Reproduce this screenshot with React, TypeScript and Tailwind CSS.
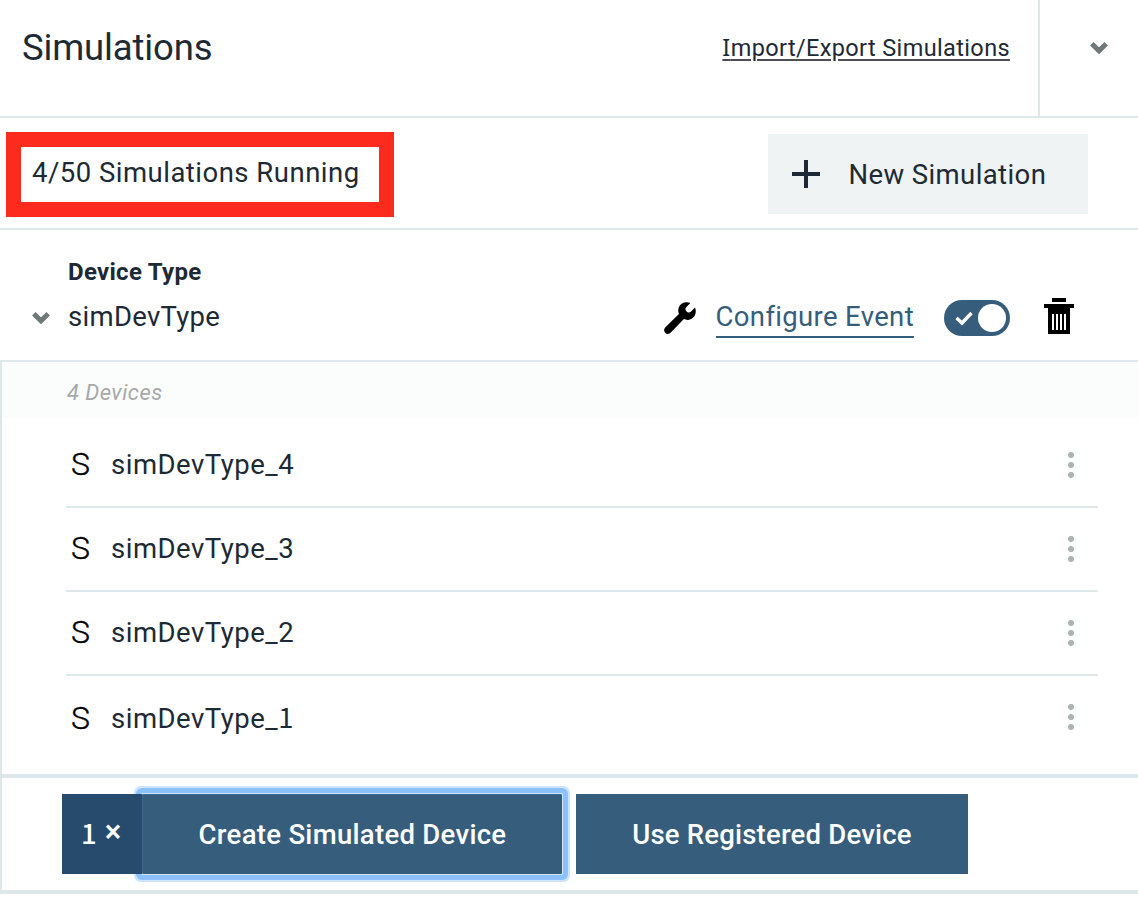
import React from "react";

type IconProps = { className?: string };

const Chevron = ({ className = "" }: IconProps) => (
  <svg className={`h-3 w-[18px] shrink-0 ${className}`} viewBox="0 0 18 12" fill="none">
    <path d="M1.8 1.8 L9 8.8 L16.2 1.8" stroke="#6f7878" strokeWidth="5" />
  </svg>
);

const Wrench = () => (
  <svg className="h-8 w-8 shrink-0" viewBox="0 0 32 32">
    <path
      d="M26.4 1 L22.2 5.2 C21.2 6.3 21.2 7.9 22.2 8.9 L23.2 9.9 C24.2 10.9 25.8 10.8 26.8 9.8 L31 5.5 C33.2 10.5 30.6 17.4 24.2 17.9 C22.6 18 21.2 17.7 19.9 17.1 L6.8 30.6 C5.2 32.3 2.9 32.4 1.4 30.9 C-0.4 29.2 -0.3 26.9 1.4 25.2 L14.9 12.1 C13.3 8 14.6 3.6 18 1.5 C20.5 0 23.7 -0.2 26.4 1 Z"
      fill="#000"
    />
  </svg>
);

const Trash = () => (
  <svg className="h-9 w-[30px] shrink-0" viewBox="0 0 30 36" shapeRendering="crispEdges">
    <path d="M8 0h14v4H8zM0 6h30v4H0zM4 10h22v26H4z" fill="#000" />
    <path d="M8 16h2v16H8zM12 16h2v16h-2zM16 16h2v16h-2zM20 16h2v16h-2z" fill="#fff" />
  </svg>
);

const Dots = () => (
  <svg className="h-[26px] w-1.5 shrink-0" viewBox="0 0 6 26" fill="#a9b5b4">
    <circle cx="3" cy="3" r="3" />
    <circle cx="3" cy="13" r="3" />
    <circle cx="3" cy="23" r="3" />
  </svg>
);

const One = () => <span className="font-['Noto_Sans_CJK_JP',sans-serif] leading-none">1</span>;

const devices = [4, 3, 2, 1];

export default function App() {
  return (
    <div className="h-[910px] w-full overflow-hidden bg-white font-['Roboto',sans-serif] text-[27.5px] text-[#1d2a35]">
      <header className="flex h-[118px] border-b-2 border-[#dfe8e8]">
        <h1 className="grow pl-[22px] text-[36.5px] leading-[95px] tracking-[-0.15px]">Simulations</h1>
        <a className="mr-[28px] text-[23.5px] leading-[95px] tracking-[0.37px] underline decoration-[#4d4f52] decoration-2 underline-offset-[3px]">
          <span className="font-['Noto_Sans',sans-serif]">I</span>mport/Export Simulations
        </a>
        <div className="w-[100px] border-l-2 border-[#dfe8e8] pl-[50px] pt-[42px]">
          <Chevron />
        </div>
      </header>

      <section className="flex h-[112px] items-start justify-between border-b-2 border-[#dfe8e8]">
        <div className="mt-3.5 ml-1.5 h-[85px] w-[388px] border-[15px] border-[#fc2b1e] pl-[11px] leading-[51px] tracking-[0.49px] whitespace-nowrap">
          4/50 Simulations Running
        </div>
        <button className="mt-4 mr-[50px] flex h-20 w-80 items-center bg-[#eff3f4] pl-6 tracking-[0.4px]">
          <svg className="mr-[28.5px] h-7 w-7" viewBox="0 0 28 28">
            <path d="M14 0V28M0 14H28" stroke="#1d2a35" strokeWidth="4" />
          </svg>
          <span className="pt-0.5">New Simulation</span>
        </button>
      </section>

      <section className="flex h-[130px] justify-between pr-16">
        <div className="flex pl-8">
          <Chevron className="mt-[82px]" />
          <div className="ml-[18px] pt-[22px]">
            <div className="text-[24px] leading-[40px] font-bold tracking-[0.3px]">Device Type</div>
            <div className="leading-[49px] tracking-[0.3px]">simDevType</div>
          </div>
        </div>
        <div className="flex h-9 items-center pt-[88px]">
          <Wrench />
          <a className="ml-5 h-10 border-b-2 border-[#365d7c] leading-[38px] tracking-[0.34px] text-[#365d7c]">
            Configure Event
          </a>
          <div className="ml-[30px] flex h-9 w-[66px] items-center rounded-full bg-[#365d7c] pl-[11px]">
            <svg className="h-4 w-[18px]" viewBox="0 0 18 16" fill="none">
              <path d="M1.5 8 L7 13 L16.5 3" stroke="#fff" strokeWidth="3.4" />
            </svg>
            <span className="ml-[5px] h-7 w-7 rounded-full bg-white" />
          </div>
          <div className="mb-1 ml-[34px]">
            <Trash />
          </div>
        </div>
      </section>

      <section className="border-t-2 border-l-2 border-[#dfe8e8]">
        <div className="h-14 bg-[#fbfdfc] pl-[65px] text-[22px] leading-[61px] tracking-[0.45px] text-[#a8a8a8] italic">
          4 Devices
        </div>
        <ul className="mr-10 ml-16 h-[356px] pt-1.5">
          {devices.map((n) => (
            <li
              key={n}
              className="group flex h-[84px] items-center border-b-2 border-[#dfe8e8] pr-6 pb-px last:border-transparent"
            >
              <span className="w-[45px] pb-0.5 pl-[5px] text-[32px] leading-10 font-light text-black [-webkit-text-stroke:0.35px_#000] group-last:pt-0.5 group-last:pb-0">
                S
              </span>
              <span className="grow leading-10 tracking-[0.5px] group-last:pt-1">
                simDevType_{n === 1 ? <One /> : n}
              </span>
              <Dots />
            </li>
          ))}
        </ul>
        <footer className="flex h-[120px] border-y-4 border-[#dfe8e8] pt-4 pl-[60px] font-medium text-white">
          <div className="z-10 flex h-20 w-20 bg-[#264b6d] pl-[19px] leading-[76px]">
            <span className="font-['Noto_Sans_CJK_JP',sans-serif]">1</span>
            <span className="ml-2 text-[31px]">×</span>
          </div>
          <button className="relative h-20 w-[420px] border-t border-l border-[#38699a] bg-[#365d7c] pt-px tracking-[0.3px] after:absolute after:-inset-px after:-top-0.5 after:-left-0.5 after:rounded-[2px] after:border after:border-[#d0e4ff] after:shadow-[0_0_0_5px_#8cc1ff,0_0_0_7px_#cfe4ff] after:content-['']">
            Create Simulated Device
          </button>
          <button className="ml-3.5 h-20 w-[392px] bg-[#365d7c] pt-0.5 tracking-[0.2px]">Use Registered Device</button>
        </footer>
      </section>
    </div>
  );
}
